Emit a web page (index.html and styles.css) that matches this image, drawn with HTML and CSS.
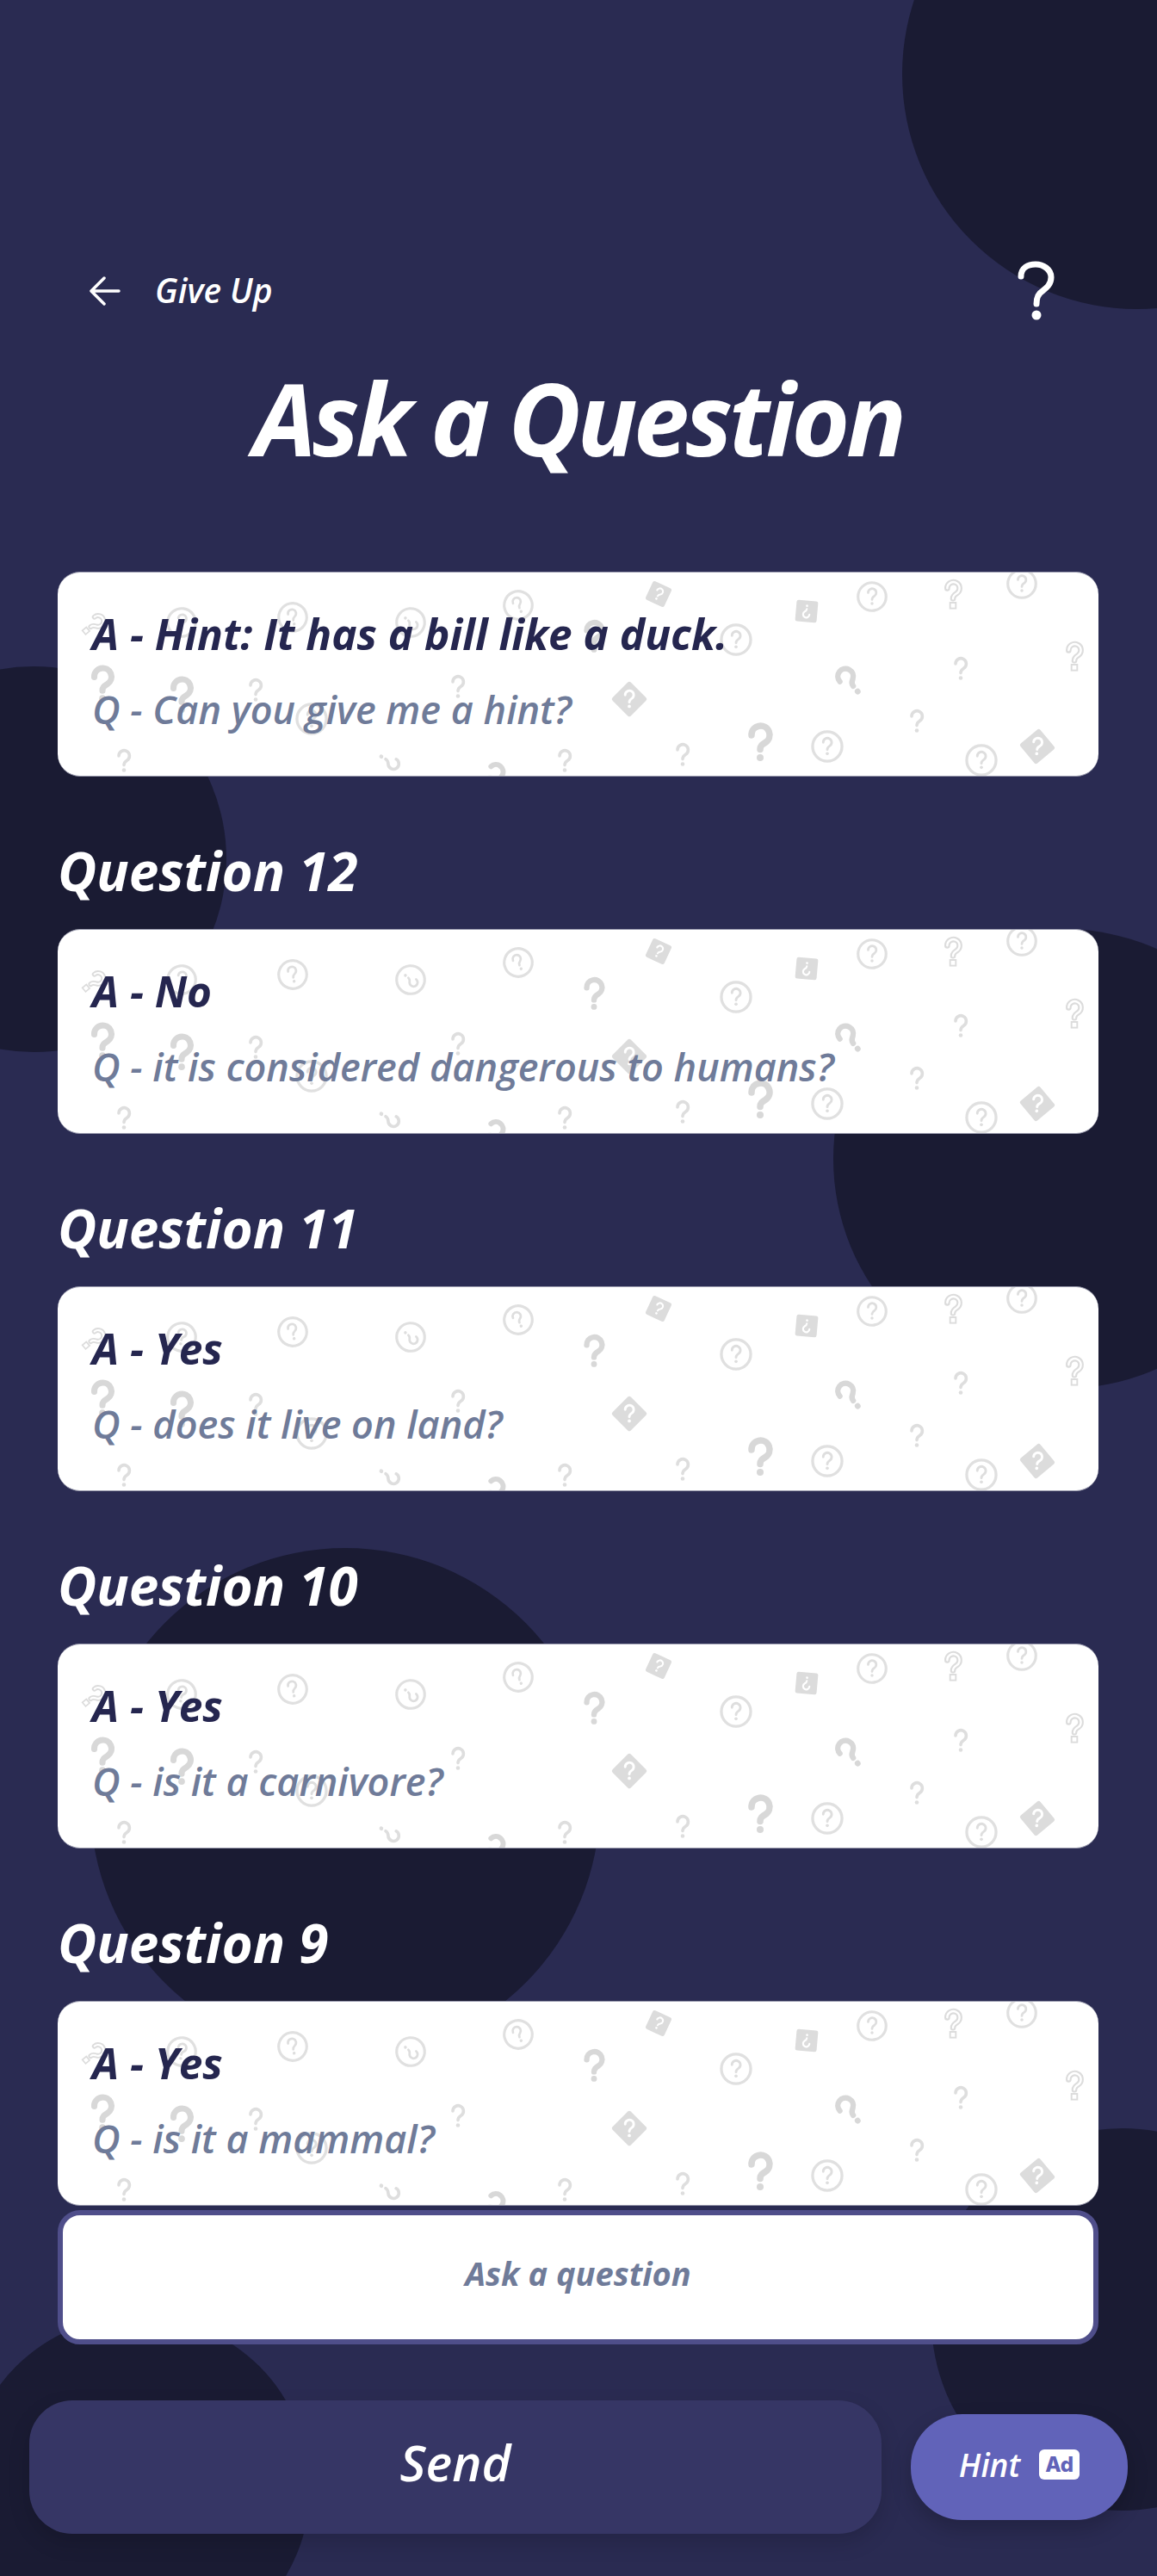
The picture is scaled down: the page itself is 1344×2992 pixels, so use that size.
FILE: index.html

```html
<html>
<head>
    <title>Ask a Question</title>
    <link rel="stylesheet" href="styles.css">
</head>
<body>
    <svg class="sprites" width="0" height="0">
        <defs>
            <g id="q-small">
                <path d="M-6 -6a6.200 6.200 0 1 1 9.500 5.200c-2.300 1.400-3.500 2.600-3.500 5.400" fill="none" stroke="#dedede" stroke-width="3.600" stroke-linecap="round"/>
                <circle cx="0" cy="10.500" r="2.300" fill="#dedede"/>
            </g>
            <g id="q-ring">
                <circle r="15.500" fill="none" stroke="#e0e0e0" stroke-width="3"/>
                <use href="#q-small" transform="scale(.72)"/>
            </g>
            <g id="q-thick">
                <path d="M-10 -9a10.500 10.500 0 1 1 16 8.500c-4 2.500-6 4-6 8" fill="none" stroke="#d8d8d8" stroke-width="7.500" stroke-linecap="round"/>
                <circle cx="0" cy="17" r="4" fill="#d8d8d8"/>
            </g>
            <g id="q-outline">
                <path d="M-7 -7a7.500 7.500 0 1 1 11.500 6.200c-3 1.800-4.500 3-4.500 6.300" fill="none" stroke="#dcdcdc" stroke-width="7" stroke-linecap="round"/>
                <path d="M-7 -7a7.500 7.500 0 1 1 11.500 6.200c-3 1.800-4.500 3-4.500 6.300" fill="none" stroke="#fff" stroke-width="2.500" stroke-linecap="round"/>
                <rect x="-3.500" y="10.500" width="7" height="7" fill="none" stroke="#dcdcdc" stroke-width="2"/>
            </g>
            <g id="q-diamond">
                <rect x="-15" y="-15" width="30" height="30" rx="2.500" transform="rotate(45)" fill="#dcdcdc"/>
                <g transform="scale(.8)"><path d="M-6 -6a6.200 6.200 0 1 1 9.500 5.200c-2.300 1.400-3.500 2.600-3.500 5.400" fill="none" stroke="#fff" stroke-width="3.600" stroke-linecap="round"/><circle cy="10.500" r="2.300" fill="#fff"/></g>
            </g>
            <g id="q-box">
                <rect x="-12.500" y="-12.500" width="25" height="25" rx="2.500" fill="#dcdcdc"/>
                <g transform="scale(.6)"><path d="M-6 -6a6.200 6.200 0 1 1 9.500 5.200c-2.300 1.400-3.500 2.600-3.500 5.400" fill="none" stroke="#fff" stroke-width="3.600" stroke-linecap="round"/><circle cy="10.500" r="2.300" fill="#fff"/></g>
            </g>
            <!-- background scatter, same in every card -->
            <g id="scatter">
                <use href="#q-outline" transform="translate(42 60) rotate(50) scale(.85)"/>
                <use href="#q-ring" transform="translate(144 58) rotate(8) scale(1.05)"/>
                <use href="#q-ring" transform="translate(273 52) rotate(-12) scale(1.05)"/>
                <use href="#q-ring" transform="translate(410 58) rotate(130) scale(1.05)"/>
                <use href="#q-ring" transform="translate(535 38) rotate(-25) scale(1.05)"/>
                <use href="#q-thick" transform="translate(623 75) scale(.85)"/>
                <use href="#q-box" transform="translate(698 25) rotate(25) scale(.95)"/>
                <use href="#q-ring" transform="translate(788 78) scale(1.1)"/>
                <use href="#q-box" transform="translate(870 45) rotate(185)"/>
                <use href="#q-ring" transform="translate(946 28) scale(1.05)"/>
                <use href="#q-outline" transform="translate(1040 25) scale(.95)"/>
                <use href="#q-ring" transform="translate(1120 13) scale(1.05)"/>
                <use href="#q-outline" transform="translate(1181 97) scale(.95)"/>
                <use href="#q-thick" transform="translate(920 127) rotate(-40) scale(.85)"/>
                <use href="#q-small" transform="translate(1049 112)"/>
                <use href="#q-small" transform="translate(998 173)"/>
                <use href="#q-diamond" transform="translate(664 147)"/>
                <use href="#q-thick" transform="translate(816 198)"/>
                <use href="#q-ring" transform="translate(894 202) scale(1.1)"/>
                <use href="#q-ring" transform="translate(1073 218) scale(1.1)"/>
                <use href="#q-diamond" transform="translate(1138 202) rotate(5)"/>
                <use href="#q-small" transform="translate(726 212)"/>
                <use href="#q-thick" transform="translate(52 130) scale(.95)"/>
                <use href="#q-thick" transform="translate(144 143) scale(.95)"/>
                <use href="#q-small" transform="translate(230 137)"/>
                <use href="#q-small" transform="translate(465 133)"/>
                <use href="#q-ring" transform="translate(295 170) scale(1.1)"/>
                <use href="#q-small" transform="translate(77 219)"/>
                <use href="#q-small" transform="translate(385 219) rotate(120)"/>
                <use href="#q-small" transform="translate(589 219)"/>
                <use href="#q-thick" transform="translate(503 236) rotate(50) scale(.8)"/>
            </g>
        </defs>
    </svg>

    <div class="screen">
        <div class="blob blob-1"></div>
        <div class="blob blob-2"></div>
        <div class="blob blob-3"></div>
        <div class="blob blob-4"></div>
        <div class="blob blob-5"></div>
        <div class="blob blob-6"></div>

        <div class="content">
            <div class="top-bar">
                <div class="give-up">
                    <svg class="arrow" width="36" height="36" viewBox="0 0 36 36"><path d="M34 18H3M17 3L2 18l15 15" fill="none" stroke="#fff" stroke-width="3.500" stroke-linecap="round" stroke-linejoin="round"/></svg>
                    <span>Give Up</span>
                </div>
                <svg class="help" width="46" height="70" viewBox="0 0 46 70"><path d="M5 18C5 8 13 4 22 4s18 6 18 15c0 8-5 12-10 16-5 3-7 7-7 15" fill="none" stroke="#fff" stroke-width="7" stroke-linecap="round"/><circle cx="23" cy="63" r="5.500" fill="#fff"/></svg>
            </div>
            <h1>Ask a Question</h1>

            <div class="card card-first">
                <svg class="scatter" viewBox="0 0 1209 238"><use href="#scatter"/></svg>
                <p class="answer">A - Hint: It has a bill like a duck.</p>
                <p class="question">Q - Can you give me a hint?</p>
            </div>

            <h2>Question 12</h2>
            <div class="card">
                <svg class="scatter" viewBox="0 0 1209 238"><use href="#scatter"/></svg>
                <p class="answer">A - No</p>
                <p class="question">Q - it is considered dangerous to humans?</p>
            </div>

            <h2>Question 11</h2>
            <div class="card">
                <svg class="scatter" viewBox="0 0 1209 238"><use href="#scatter"/></svg>
                <p class="answer">A - Yes</p>
                <p class="question">Q - does it live on land?</p>
            </div>

            <h2>Question 10</h2>
            <div class="card">
                <svg class="scatter" viewBox="0 0 1209 238"><use href="#scatter"/></svg>
                <p class="answer">A - Yes</p>
                <p class="question">Q - is it a carnivore?</p>
            </div>

            <h2>Question 9</h2>
            <div class="card">
                <svg class="scatter" viewBox="0 0 1209 238"><use href="#scatter"/></svg>
                <p class="answer">A - Yes</p>
                <p class="question">Q - is it a mammal?</p>
            </div>

            <div class="ask-input">Ask a question</div>

            <div class="bottom-bar">
                <div class="send-btn">Send</div>
                <div class="hint-btn">
                    <span>Hint</span>
                    <span class="ad-badge">Ad</span>
                </div>
            </div>
        </div>
    </div>
</body>
</html>
```

FILE: styles.css

```css
body {
    margin: 0;
    background-color: #2a2b52;
    font-family: "Open Sans", "Noto Sans", sans-serif;
    font-style: italic;
    color: #fff;
}

.sprites {
    display: block;
    height: 0;
}

.screen {
    position: relative;
    width: 1344px;
    height: 2992px;
    overflow: hidden;
}

/* dark circles behind everything */
.blob {
    position: absolute;
    border-radius: 50%;
    background-color: #1a1b33;
}
.blob-1 { left: 1048px; top: -187px; width: 546px; height: 546px; }
.blob-2 { left: -185px; top: 774px; width: 448px; height: 448px; }
.blob-3 { left: 968px; top: 1079px; width: 534px; height: 534px; }
.blob-4 { left: 105px; top: 1798px; width: 592px; height: 592px; }
.blob-5 { left: -40px; top: 2690px; width: 400px; height: 400px; }
.blob-6 { left: 1082px; top: 2472px; width: 444px; height: 444px; }

.content {
    position: relative;
    padding: 300px 68px 0 67px;
}

.top-bar {
    display: flex;
    justify-content: space-between;
    align-items: center;
    height: 76px;
    padding: 0 49px 0 37px;
}

.give-up {
    display: flex;
    align-items: center;
    gap: 40px;
    font-size: 39px;
    font-weight: 600;
}

.give-up span {
    margin-top: -3px;
}

.arrow {
    flex: none;
}

h1 {
    margin: 29px 0 0;
    height: 164px;
    font-size: 116px;
    line-height: 160px;
    font-weight: 700;
    text-align: center;
    letter-spacing: -4.500px;
}

h2 {
    box-sizing: border-box;
    margin: 0;
    height: 177px;
    padding-top: 42px;
    line-height: 135px;
    font-size: 62px;
    font-weight: 700;
}

.card {
    position: relative;
    height: 236px;
    overflow: hidden;
    padding: 0 40px;
    background-color: #fff;
    border-top: 1px solid #9a9bae;
    border-bottom: 1px solid #9a9bae;
    border-radius: 26px;
}

.card-first {
    margin-top: 95px;
}

.scatter {
    position: absolute;
    left: 0;
    top: 0;
    width: 1209px;
    height: 238px;
}

.card p {
    position: relative;
    margin: 0;
}

.answer {
    padding-top: 39px;
    height: 64px;
    line-height: 64px;
    font-size: 49.500px;
    font-weight: 700;
    color: #25264f;
}

.question {
    padding-top: 24px;
    height: 64px;
    line-height: 64px;
    font-size: 45px;
    font-weight: 600;
    color: #6f7b99;
}

.ask-input {
    box-sizing: border-box;
    display: flex;
    align-items: center;
    justify-content: center;
    height: 156px;
    margin-top: 5px;
    padding-bottom: 10px;
    background-color: #fff;
    border: 6px solid #4f4e8a;
    border-radius: 26px;
    font-size: 38px;
    font-weight: 700;
    color: #6f7b99;
}

.bottom-bar {
    display: flex;
    align-items: center;
    gap: 34px;
    margin: 65px -34px 0 -33px;
}

.send-btn {
    display: flex;
    align-items: center;
    justify-content: center;
    width: 990px;
    height: 155px;
    padding-bottom: 12px;
    box-sizing: border-box;
    border-radius: 50px;
    background-color: #363665;
    box-shadow: 0 10px 24px rgba(0, 0, 0, 0.15);
    font-size: 58px;
    font-weight: 600;
}

.hint-btn {
    box-sizing: border-box;
    display: flex;
    align-items: center;
    justify-content: center;
    gap: 22px;
    width: 252px;
    height: 123px;
    padding-bottom: 6px;
    border-radius: 60px;
    background-color: #6163b9;
    box-shadow: 0 10px 24px rgba(0, 0, 0, 0.2);
    font-size: 37px;
    font-weight: 600;
}

.ad-badge {
    display: flex;
    align-items: center;
    justify-content: center;
    width: 47px;
    height: 35px;
    border-radius: 6px;
    background-color: #fff;
    color: #6163b9;
    font-family: "Inter", sans-serif;
    font-style: normal;
    font-size: 24px;
    font-weight: 800;
}
```
